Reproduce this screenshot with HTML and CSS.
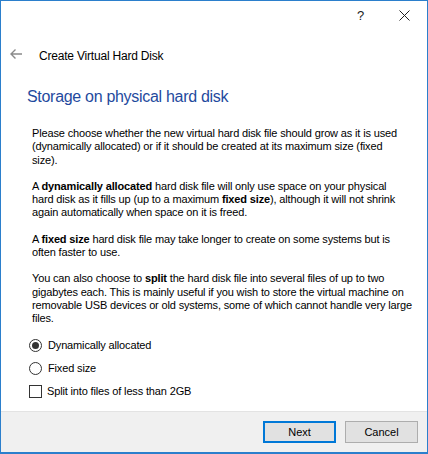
FILE: index.html
```html
<!DOCTYPE html>
<html>
<head>
<meta charset="utf-8">
<link rel="stylesheet" href="styles.css">
</head>
<body>
<div class="window">
  <div class="titlebar">
    <span class="tb-help">?</span>
    <span class="tb-close">
      <svg width="11" height="11" viewBox="0 0 11 11"><path d="M0.5 0.5 L10.5 10.5 M10.5 0.5 L0.5 10.5" stroke="#222" stroke-width="1" fill="none"/></svg>
    </span>
  </div>
  <div class="header">
    <svg class="back" width="12" height="10" viewBox="0 0 12 10"><path d="M5.5 0.5 L1 5 L5.5 9.5 M1 5 H12" stroke="#8a8a8a" stroke-width="1.4" fill="none"/></svg>
    <span class="header-title">Create Virtual Hard Disk</span>
  </div>
  <div class="content">
    <h1 class="heading">Storage on physical hard disk</h1>
    <p class="para">Please choose whether the new virtual hard disk file should grow as it is used<br>(dynamically allocated) or if it should be created at its maximum size (fixed<br>size).</p>
    <p class="para">A <b>dynamically allocated</b> hard disk file will only use space on your physical<br>hard disk as it fills up (up to a maximum <b>fixed size</b>), although it will not shrink<br>again automatically when space on it is freed.</p>
    <p class="para">A <b>fixed size</b> hard disk file may take longer to create on some systems but is<br>often faster to use.</p>
    <p class="para">You can also choose to <b>split</b> the hard disk file into several files of up to two<br>gigabytes each. This is mainly useful if you wish to store the virtual machine on<br>removable USB devices or old systems, some of which cannot handle very large<br>files.</p>
    <div class="options">
      <div class="option"><span class="radio checked"></span><span>Dynamically allocated</span></div>
      <div class="option"><span class="radio"></span><span>Fixed size</span></div>
      <div class="option"><span class="check"></span><span>Split into files of less than 2GB</span></div>
    </div>
  </div>
  <div class="footer">
    <button class="btn btn-default">Next</button>
    <button class="btn">Cancel</button>
  </div>
</div>
</body>
</html>
```
FILE: styles.css
```css
html, body {
  margin: 0;
  padding: 0;
  background: #fff;
}
.window {
  box-sizing: border-box;
  width: 428px;
  height: 454px;
  border: 1px solid #2b7fcc;
  border-bottom-width: 2px;
  display: flex;
  flex-direction: column;
  font-family: "Liberation Sans", Arial, sans-serif;
  font-size: 11px;
  letter-spacing: -0.15px;
  color: #000;
  background: #fff;
}
.titlebar {
  height: 29px;
  display: flex;
  align-items: center;
  justify-content: flex-end;
  padding-right: 17px;
}
.tb-help {
  font-size: 13px;
  color: #222;
  margin-right: 35px;
}
.tb-close {
  display: flex;
}
.header {
  height: 48px;
  display: flex;
  align-items: center;
  padding-left: 9px;
}
.back {
  margin-right: 17px;
}
.header-title {
  font-size: 12px;
  letter-spacing: -0.2px;
  margin-top: 4px;
}
.content {
  flex: 1;
  padding-left: 26px;
  padding-right: 10px;
}
.heading {
  margin: 9px 0 20px 0;
  font-size: 16px;
  font-weight: normal;
  letter-spacing: -0.3px;
  color: #1f4a9e;
  line-height: 20px;
}
.para {
  margin: 0 0 13px 5px;
  line-height: 13.3px;
  white-space: nowrap;
}
.options {
  margin-top: 9px;
  padding-left: 2px;
  display: flex;
  flex-direction: column;
  gap: 10px;
}
.option {
  display: flex;
  align-items: center;
  height: 13px;
}
.radio {
  box-sizing: border-box;
  width: 13px;
  height: 13px;
  border: 1px solid #333;
  border-radius: 50%;
  margin-right: 6px;
  display: flex;
  align-items: center;
  justify-content: center;
}
.radio.checked::after {
  content: "";
  width: 7px;
  height: 7px;
  border-radius: 50%;
  background: #333;
}
.check {
  box-sizing: border-box;
  width: 13px;
  height: 13px;
  border: 1px solid #333;
  margin-right: 5px;
}
.footer {
  height: 40px;
  background: #f0f0f0;
  border-top: 1px solid #e3e3e3;
  display: flex;
  align-items: center;
  justify-content: flex-end;
  padding-right: 9px;
  gap: 9px;
}
.btn {
  box-sizing: border-box;
  width: 73px;
  height: 22px;
  font-family: "Liberation Sans", Arial, sans-serif;
  font-size: 11px;
  color: #000;
  background: #e1e1e1;
  border: 1px solid #adadad;
  padding: 0;
}
.btn-default {
  border: 2px solid #0078d7;
}
```
